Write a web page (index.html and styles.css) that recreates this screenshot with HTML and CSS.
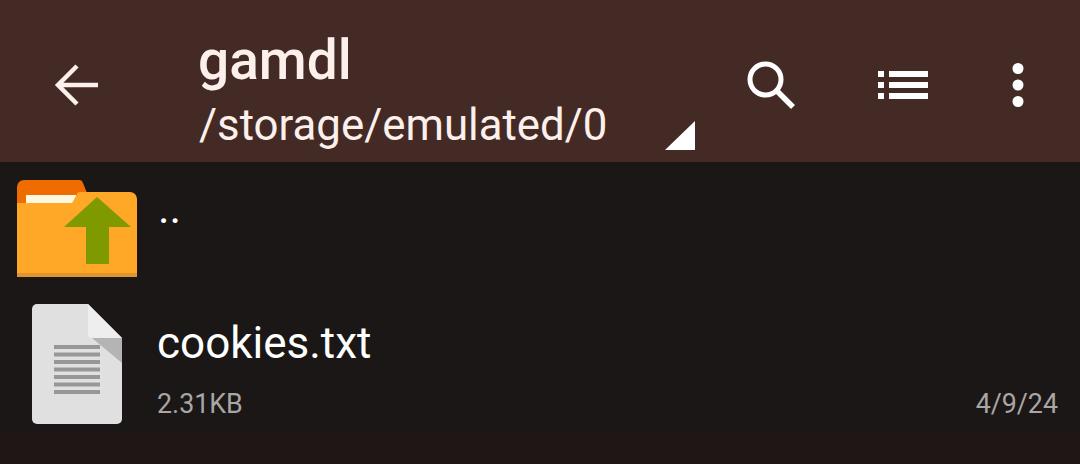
FILE: index.html
```html
<!DOCTYPE html>
<html lang="en">
<head>
  <meta charset="UTF-8" />
  <title>gamdl</title>
  <link rel="stylesheet" href="styles.css">
</head>
<body>

  <header class="toolbar">
    <button class="icon-btn back" aria-label="Back">
      <svg width="46" height="46" viewBox="0 0 46 46"><path d="M45 23H4M24 4L5 23l19 19" fill="none" stroke="#fdf0ec" stroke-width="4.500"/></svg>
    </button>
    <div class="titles">
      <h1>gamdl</h1>
      <p>/storage/emulated/0</p>
      <span class="spinner-mark"></span>
    </div>
    <div class="actions">
      <button class="icon-btn" aria-label="Search">
        <svg width="50" height="50" viewBox="0 0 50 50"><circle cx="19.500" cy="19.500" r="15.500" fill="none" stroke="#fff" stroke-width="5"/><path d="M30 30l17 17" stroke="#fff" stroke-width="5.500" fill="none"/></svg>
      </button>
      <button class="icon-btn" aria-label="List view">
        <svg width="50" height="28" viewBox="0 0 50 28" fill="#fff"><rect x="0" y="0" width="6" height="6"/><rect x="11" y="0" width="39" height="6"/><rect x="0" y="11" width="6" height="6"/><rect x="11" y="11" width="39" height="6"/><rect x="0" y="22" width="6" height="6"/><rect x="11" y="22" width="39" height="6"/></svg>
      </button>
      <button class="icon-btn" aria-label="More">
        <svg width="12" height="44" viewBox="0 0 12 44" fill="#fff"><circle cx="6" cy="5.500" r="5.500"/><circle cx="6" cy="22" r="5.500"/><circle cx="6" cy="38.500" r="5.500"/></svg>
      </button>
    </div>
  </header>

  <main class="file-list">
    <div class="row row-up">
      <svg class="file-icon" width="120" height="97" viewBox="0 0 120 97">
        <path d="M0 92V7a7 7 0 0 1 7-7h56a4 4 0 0 1 3 3l4 10v30H0z" fill="#ef6c00"/>
        <path d="M9 15h50v8H9z" fill="#fff8e1"/>
        <path d="M0 97V23h55l5-9a3 3 0 0 1 3-2h50a7 7 0 0 1 7 7v78z" fill="#ffa726"/>
        <rect y="93" width="120" height="4" fill="#e09530"/>
        <path d="M80 17l34 30H92v37H69V47H47z" fill="#7f9a00"/>
      </svg>
      <div class="row-text">
        <div class="name dots">..</div>
      </div>
    </div>

    <div class="row row-file">
      <svg class="file-icon doc" width="90" height="120" viewBox="0 0 90 120">
        <path d="M5 0h51l34 34v81a5 5 0 0 1-5 5H5a5 5 0 0 1-5-5V5a5 5 0 0 1 5-5z" fill="#e0e0e0"/>
        <path d="M56 0l34 34H60a4 4 0 0 1-4-4z" fill="#eeeeee"/>
        <path d="M60 34h30v25z" fill="#b4b4b4"/>
        <g fill="#979797">
          <rect x="22" y="41" width="46" height="4"/>
          <rect x="22" y="48.500" width="46" height="4"/>
          <rect x="22" y="56" width="46" height="4"/>
          <rect x="22" y="63.500" width="46" height="4"/>
          <rect x="22" y="71" width="46" height="4"/>
          <rect x="22" y="78.500" width="46" height="4"/>
          <rect x="22" y="86" width="46" height="4"/>
        </g>
      </svg>
      <div class="row-text">
        <div class="name">cookies.txt</div>
        <div class="meta">
          <span>2.31KB</span>
          <span>4/9/24</span>
        </div>
      </div>
    </div>
  </main>

</body>
</html>
```

FILE: styles.css
```css
* {
  margin: 0;
  padding: 0;
  box-sizing: border-box;
}
html, body {
  width: 1080px;
  height: 464px;
  overflow: hidden;
}
body {
  background: #1e1716;
  color: #fff;
  font-family: Roboto, "Liberation Sans", sans-serif;
}
.toolbar {
  display: flex;
  align-items: flex-start;
  height: 162px;
  background: #432a25;
  color: #fdf0ec;
}
.icon-btn {
  display: flex;
  align-items: center;
  justify-content: center;
  background: none;
  border: none;
}
.back {
  width: 199px;
  height: 46px;
  margin-top: 62px;
  padding-right: 47px;
}
.titles {
  position: relative;
  width: 496px;
  height: 162px;
}
.titles h1 {
  font-size: 55px;
  font-weight: 500;
  line-height: 54px;
  margin-top: 33px;
  margin-left: -1px;
}
.titles p {
  font-size: 43.800px;
  line-height: 44px;
  margin-top: 16px;
}
.spinner-mark {
  position: absolute;
  left: 466px;
  top: 121px;
  width: 30px;
  height: 29px;
  background: #fff;
  clip-path: polygon(100% 0, 100% 100%, 0 100%);
}
.actions {
  display: flex;
  align-items: center;
  width: 385px;
  height: 50px;
  margin-top: 60px;
  padding-left: 51px;
}
.actions .icon-btn:nth-child(2) {
  margin-left: 82px;
}
.actions .icon-btn:nth-child(3) {
  margin-left: 84px;
}
.file-list {
  background: #1b1716;
  height: 270px;
}
.row {
  display: flex;
  padding-right: 22px;
}
.row-up {
  height: 128px;
  padding-top: 18px;
  padding-left: 17px;
}
.row-file {
  height: 142px;
  padding-top: 14px;
  padding-left: 32px;
}
.file-icon {
  flex: none;
}
.row-text {
  flex: 1;
  margin-left: 21px;
}
.row-file .row-text {
  margin-left: 35px;
}
.name {
  font-size: 44px;
  line-height: 50px;
}
.dots {
  line-height: 40px;
  margin-top: 8px;
}
.row-file .name {
  margin-top: 14px;
}
.meta {
  display: flex;
  justify-content: space-between;
  margin-top: 21px;
  font-size: 26.800px;
  line-height: 30px;
  color: #a9a6a5;
}
```
